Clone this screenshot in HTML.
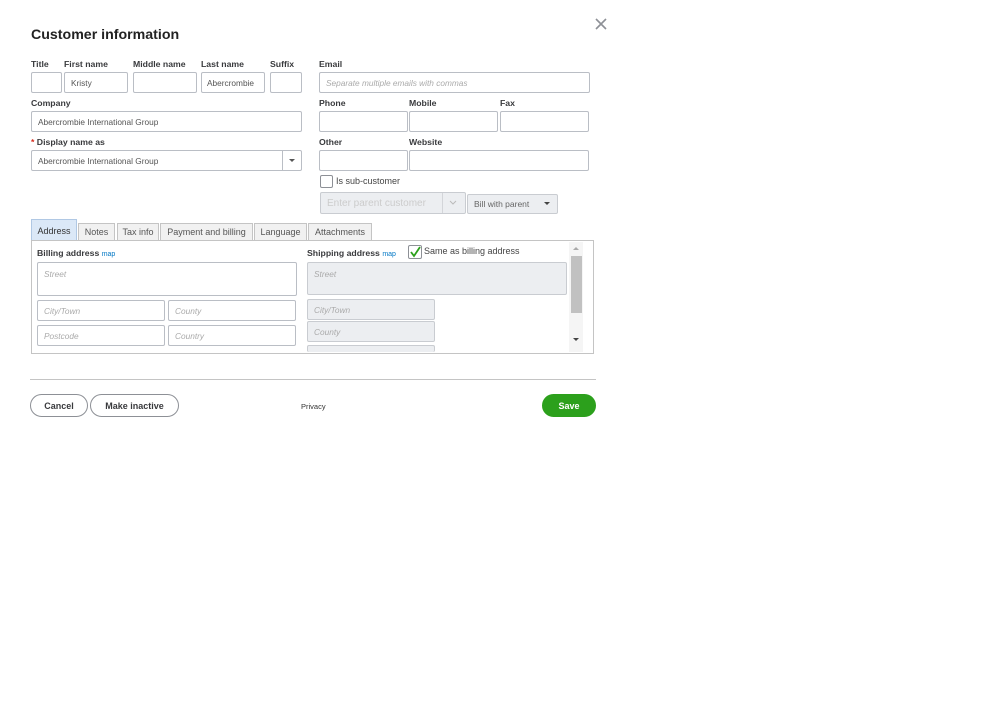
<!DOCTYPE html>
<html><head><meta charset="utf-8"><style>
*{box-sizing:border-box;margin:0;padding:0}
body{width:999px;height:706px;background:#fff;font-family:"Liberation Sans",sans-serif;color:#333;position:relative;overflow:hidden}
.a{position:absolute}
.l{position:absolute;font-size:8.7px;font-weight:bold;color:#393a3d}
.i{position:absolute;border:1px solid #babec5;border-radius:2px;background:#fff;font-size:8.3px;color:#555;padding-left:6px;display:flex;align-items:center}
.ph{color:#aaa;font-style:italic}
.g{background:#eceef1;border-color:#c9ccd1}
.tab{position:absolute;top:223px;height:17px;border:1px solid #c4c4c4;border-bottom:none;background:#f1f1f1;font-size:9px;color:#555;display:flex;align-items:center;justify-content:center}
.btn{position:absolute;top:394px;height:23px;border:1px solid #8d9096;border-radius:12px;font-size:9px;font-weight:bold;display:flex;align-items:center;justify-content:center;color:#393a3d;background:#fff}
</style></head><body>
<div class="a" style="left:31px;top:27px;font-size:14.2px;font-weight:bold;color:#222">Customer information</div>
<svg class="a" style="left:595px;top:18px" width="12" height="12"><path d="M1 1L11 11M11 1L1 11" stroke="#8d9096" stroke-width="1.6"/></svg>

<div class="l" style="left:31px;top:59px">Title</div>
<div class="l" style="left:64px;top:59px">First name</div>
<div class="l" style="left:133px;top:59px">Middle name</div>
<div class="l" style="left:201px;top:59px">Last name</div>
<div class="l" style="left:270px;top:59px">Suffix</div>
<div class="l" style="left:319px;top:59px">Email</div>
<div class="i" style="left:31px;top:72px;width:31px;height:21px"></div>
<div class="i" style="left:64px;top:72px;width:64px;height:21px">Kristy</div>
<div class="i" style="left:133px;top:72px;width:64px;height:21px"></div>
<div class="i" style="left:201px;top:72px;width:64px;height:21px;padding-left:5px;overflow:hidden;white-space:nowrap">Abercrombie</div>
<div class="i" style="left:270px;top:72px;width:32px;height:21px"></div>
<div class="i ph" style="left:319px;top:72px;width:271px;height:21px">Separate multiple emails with commas</div>

<div class="l" style="left:31px;top:98px">Company</div>
<div class="l" style="left:319px;top:98px">Phone</div>
<div class="l" style="left:409px;top:98px">Mobile</div>
<div class="l" style="left:500px;top:98px">Fax</div>
<div class="i" style="left:31px;top:111px;width:271px;height:21px">Abercrombie International Group</div>
<div class="i" style="left:319px;top:111px;width:89px;height:21px"></div>
<div class="i" style="left:409px;top:111px;width:89px;height:21px"></div>
<div class="i" style="left:500px;top:111px;width:89px;height:21px"></div>

<div class="l" style="left:31px;top:137px"><span style="color:#d52b1e">*</span> Display name as</div>
<div class="l" style="left:319px;top:137px">Other</div>
<div class="l" style="left:409px;top:137px">Website</div>
<div class="i" style="left:31px;top:150px;width:271px;height:21px">Abercrombie International Group</div>
<div class="a" style="left:282px;top:151px;width:1px;height:19px;background:#babec5"></div>
<div class="a" style="left:289px;top:159px;border-left:3px solid transparent;border-right:3px solid transparent;border-top:3px solid #555"></div>
<div class="i" style="left:319px;top:150px;width:89px;height:21px"></div>
<div class="i" style="left:409px;top:150px;width:180px;height:21px"></div>

<div class="a" style="left:320px;top:175px;width:13px;height:13px;border:1px solid #8d9096;border-radius:2px"></div>
<div class="a" style="left:336px;top:176px;font-size:9px;color:#444">Is sub-customer</div>
<div class="i g" style="left:320px;top:192px;width:146px;height:22px;color:#ccc;font-size:10px">Enter parent customer</div>
<div class="a" style="left:442px;top:193px;width:1px;height:20px;background:#d3d5d9"></div>
<svg class="a" style="left:449px;top:200px" width="8" height="6"><path d="M1 1L4 4L7 1" stroke="#bbb" fill="none"/></svg>
<div class="i g" style="left:467px;top:194px;width:91px;height:20px;font-size:8.5px;color:#666">Bill with parent</div>
<div class="a" style="left:544px;top:202px;border-left:3px solid transparent;border-right:3px solid transparent;border-top:3px solid #444"></div>

<div class="tab" style="left:31px;top:219px;height:22px;width:46px;background:#dbe8f7;border-color:#b0c8e4;color:#333">Address</div>
<div class="tab" style="left:78px;width:37px">Notes</div>
<div class="tab" style="left:117px;width:42px">Tax info</div>
<div class="tab" style="left:160px;width:93px">Payment and billing</div>
<div class="tab" style="left:254px;width:53px">Language</div>
<div class="tab" style="left:308px;width:64px">Attachments</div>
<div class="a" style="left:31px;top:240px;width:563px;height:114px;border:1px solid #c4c4c4"></div>

<div class="l" style="left:37px;top:248px">Billing address <span style="color:#0077c5;font-weight:normal;font-size:7px">map</span></div>
<div class="i ph" style="left:37px;top:262px;width:260px;height:34px;align-items:flex-start;padding-top:6px">Street</div>
<div class="i ph" style="left:37px;top:300px;width:128px;height:21px">City/Town</div>
<div class="i ph" style="left:168px;top:300px;width:128px;height:21px">County</div>
<div class="i ph" style="left:37px;top:325px;width:128px;height:21px">Postcode</div>
<div class="i ph" style="left:168px;top:325px;width:128px;height:21px">Country</div>

<div class="l" style="left:307px;top:248px">Shipping address <span style="color:#0077c5;font-weight:normal;font-size:7px">map</span></div>
<div class="a" style="left:408px;top:245px;width:14px;height:14px;border:1px solid #8d9096;border-radius:2px;background:#fff"></div>
<svg class="a" style="left:409px;top:246px" width="12" height="12"><path d="M2 6L5 10L11 1" stroke="#2ca01c" stroke-width="1.8" fill="none"/></svg>
<div class="a" style="left:424px;top:246px;font-size:9px;color:#444">Same as billing address</div>
<div class="i ph g" style="left:307px;top:262px;width:260px;height:33px;align-items:flex-start;padding-top:6px">Street</div>
<div class="i ph g" style="left:307px;top:299px;width:128px;height:21px">City/Town</div>
<div class="i ph g" style="left:307px;top:321px;width:128px;height:21px">County</div>
<div class="i g" style="left:307px;top:345px;width:128px;height:7px;border-bottom:none"></div>
<div class="a" style="left:569px;top:242px;width:14px;height:110px;background:#f5f5f5"></div>
<div class="a" style="left:571px;top:256px;width:11px;height:57px;background:#c1c1c1"></div>
<div class="a" style="left:573px;top:247px;border-left:3px solid transparent;border-right:3px solid transparent;border-bottom:3px solid #aaa"></div>
<div class="a" style="left:573px;top:338px;border-left:3px solid transparent;border-right:3px solid transparent;border-top:3px solid #444"></div>

<div class="a" style="left:30px;top:379px;width:566px;height:1px;background:#c4c4c4"></div>
<div class="btn" style="left:30px;width:58px">Cancel</div>
<div class="btn" style="left:90px;width:89px">Make inactive</div>
<div class="a" style="left:301px;top:402px;font-size:7.5px;color:#333">Privacy</div>
<div class="btn" style="left:542px;width:54px;background:#2ca01c;border-color:#2ca01c;color:#fff">Save</div>
</body></html>
